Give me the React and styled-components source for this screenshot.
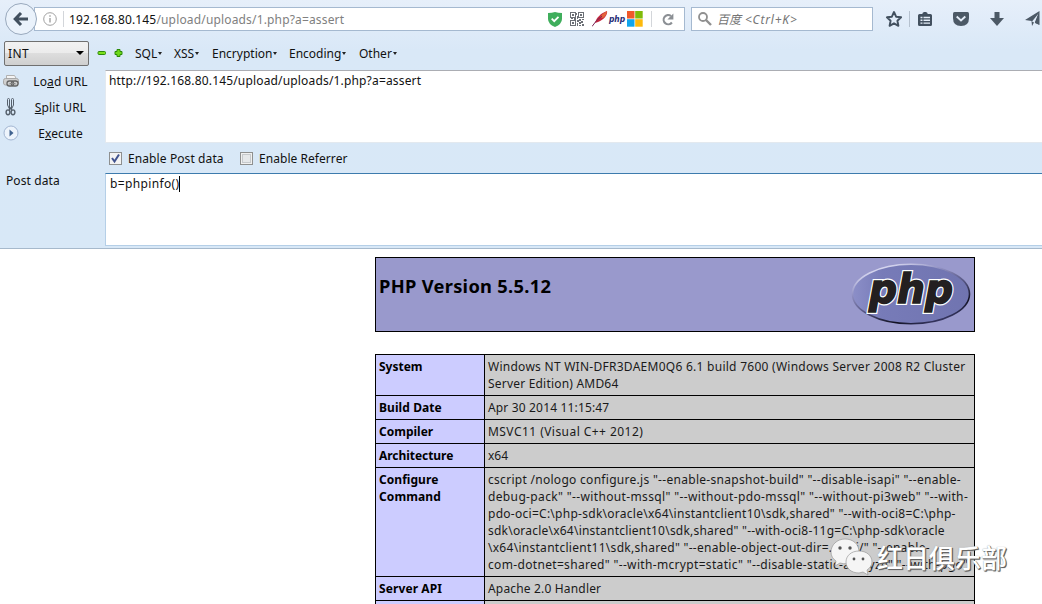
import React from "react";
import styled, { createGlobalStyle } from "styled-components";

const Global = createGlobalStyle`
  * { box-sizing: border-box; }
  html, body { margin: 0; background: #fff; overflow: hidden; }
  body {
    font-family: "Noto Sans", "Noto Sans CJK SC", sans-serif;
    font-size: 12px;
    line-height: 17px;
    color: #111;
  }
`;

const Page = styled.div`
  position: relative;
  width: 1042px;
  height: 604px;
  overflow: hidden;
`;
const Text = styled.span`
  white-space: pre;
  letter-spacing: ${(p) => p.$ls || 0}px;
`;
const Chrome = styled.header`
  height: 249px;
  background: linear-gradient(#e6effa 0, #e1ecf9 20px, #d9e8f7 50px, #d8e8f7 100%);
  border-bottom: 1px solid #a6b9cc;
`;
const NavBar = styled.div`
  display: flex;
  align-items: center;
  height: 38px;
  padding-left: 5px;
`;
const BackButton = styled.div`
  width: 32px;
  height: 32px;
  flex: none;
  border: 1px solid #99a9bd;
  border-radius: 50%;
  background: #eaf2fb;
  z-index: 1;
  display: flex;
  align-items: center;
  justify-content: center;
`;
const UrlField = styled.div`
  display: flex;
  align-items: center;
  width: 651px;
  height: 24px;
  flex: none;
  margin-left: -3px;
  padding-left: 8px;
  border: 1px solid #a5b9d0;
  background: #fff;
  svg { flex: none; }
`;
const Divider = styled.i`
  width: 1px;
  height: 16px;
  flex: none;
  margin: ${(p) => p.$m};
  background: ${(p) => p.$c || "#d3d6da"};
`;
const Url = styled.div`
  flex: 1;
  color: #808080;
  b { font-weight: 400; color: #111; }
`;
const UrlIcons = styled.div`
  display: flex;
  align-items: center;
  height: 22px;
`;
const SearchField = styled.div`
  display: flex;
  align-items: center;
  width: 182px;
  height: 24px;
  flex: none;
  margin-left: 6px;
  padding-left: 6px;
  border: 1px solid #a5b9d0;
  background: #fff;
  color: #757575;
  font-style: italic;
  svg { margin-right: 5px; }
`;
const NavIcons = styled.div`
  display: flex;
  align-items: center;
  padding-left: 12px;
  svg { flex: none; }
`;
const HackBar = styled.div`
  display: flex;
  align-items: center;
  height: 32px;
  padding: 0 0 2px 4px;
`;
const Select = styled.div`
  display: flex;
  align-items: center;
  justify-content: space-between;
  width: 85px;
  height: 25px;
  margin-right: 8px;
  padding: 0 4px 0 3px;
  border: 1px solid #707070;
  border-radius: 2px;
  background: linear-gradient(#f2f2f2, #ebebeb 50%, #dddddd 50%, #cfcfcf);
`;
const SignIcon = styled.svg`
  flex: none;
  margin-right: ${(p) => p.$gap}px;
`;
const Menu = styled.div`
  display: flex;
  align-items: center;
  width: ${(p) => p.$w}px;
  flex: none;
`;
const Caret = styled.i`
  margin: 0 0 0 1px;
  border: 2px solid transparent;
  border-top: 3px solid #222;
  border-bottom: 0;
`;
const Panel = styled.div`
  display: grid;
  grid-template-columns: 105px 1fr;
  grid-template-rows: 73px 30px 73px;
`;
const Actions = styled.div`
  grid-row: 1 / 3;
  display: flex;
  flex-direction: column;
  height: 78px;
  margin-top: -2px;
`;
const Action = styled.div`
  display: grid;
  grid-template-columns: 16px 1fr;
  align-items: center;
  height: 26px;
  padding-left: 3px;
  span { justify-self: center; margin-right: 3px; }
`;
const Area = styled.div`
  border: 1px solid ${(p) => (p.$focus ? "#b5cfe7" : "#e3e9ef")};
  border-top-color: ${(p) => (p.$focus ? "#3d7bad" : "#abadb3")};
  border-right: 0;
  background: #fff;
  padding: ${(p) => (p.$focus ? "1px 0 0 4px" : "1px 0 0 3px")};
  color: #111;
`;
const Caption = styled.div`
  margin-top: -1px;
  padding: 0 0 0 6px;
`;
const Options = styled.div`
  display: flex;
  align-items: center;
  padding-left: 4px;
`;
const Box = styled.svg`
  margin-right: 6px;
`;
const Cursor = styled.i`
  display: inline-block;
  width: 1px;
  height: 16px;
  vertical-align: -4px;
  background: #000;
`;
const Info = styled.main`
  width: 600px;
  margin: 8px 0 0 375px;
  color: #111;
`;
const Banner = styled.div`
  display: flex;
  justify-content: space-between;
  height: 75px;
  padding: 3px 3px 0;
  border: 1px solid #000;
  background: #9999cc;
`;
const Title = styled.h1`
  margin: 13px 0 0;
  font-size: 18.3px;
  line-height: 24px;
  color: #000;
`;
const Table = styled.div`
  margin-top: 22px;
  border: 1px solid #000;
  border-bottom: 0;
  background: #000;
`;
const Row = styled.div`
  display: grid;
  grid-template-columns: 108px 489px;
  column-gap: 1px;
  border-bottom: 1px solid #000;
`;
const Cell = styled.div`
  display: flex;
  flex-direction: column;
  min-height: 23px;
  padding: 3px 0 3px 3px;
  background: ${(p) => (p.$head ? "#ccccff" : "#cccccc")};
  font-weight: ${(p) => (p.$head ? 700 : 400)};
  color: ${(p) => (p.$head ? "#000" : "#1a1a1a")};
`;
const Watermark = styled.div`
  position: absolute;
  left: 830px;
  top: 537px;
  display: flex;
  align-items: center;
  color: #fff;
  font: 500 26px/40px "Noto Sans CJK SC", sans-serif;
  text-shadow: 1px 1px 0 #666, 1px 1px 1px #555, 0 0 1px #999;
`;

const rows = [
  [["System", 0], [["Windows NT WIN-DFR3DAEM0Q6 6.1 build 7600 (Windows Server 2008 R2 Cluster", 0.265], ["Server Edition) AMD64", 0.2]]],
  [["Build Date", 0.08], [["Apr 30 2014 11:15:47", 0.16]]],
  [["Compiler", 0], [["MSVC11 (Visual C++ 2012)", 0.45]]],
  [["Architecture", -0.05], [["x64", 0]]],
  [["Configure", 0.05, "Command", 0.1], [
    ['cscript /nologo configure.js "--enable-snapshot-build" "--disable-isapi" "--enable-', 0.29],
    ['debug-pack" "--without-mssql" "--without-pdo-mssql" "--without-pi3web" "--with-', 0.36],
    ['pdo-oci=C:\\php-sdk\\oracle\\x64\\instantclient10\\sdk,shared" "--with-oci8=C:\\php-', 0.27],
    ['sdk\\oracle\\x64\\instantclient10\\sdk,shared" "--with-oci8-11g=C:\\php-sdk\\oracle', 0.22],
    ['\\x64\\instantclient11\\sdk,shared" "--enable-object-out-dir=../obj/" "--enable-', 0.28],
    ['com-dotnet=shared" "--with-mcrypt=static" "--disable-static-analyze" "--with-pgo"', 0.33],
  ]],
  [["Server API", 0.1], [["Apache 2.0 Handler", 0.17]]],
  [["", 0], [["", 0]]],
];

const menus = [["SQL", 39], ["XSS", 38], ["Encryption", 77], ["Encoding", 70], ["Other", 50]];

const PhpLogo = () => (
  <svg width="120" height="66" viewBox="0 0 120 66">
    <defs>
      <linearGradient id="rim" x1="0.25" y1="0" x2="0.8" y2="0.9">
        <stop offset="0" stopColor="#e4e4f8" />
        <stop offset="0.3" stopColor="#9090c2" />
        <stop offset="0.6" stopColor="#50507c" />
        <stop offset="0.85" stopColor="#111122" />
        <stop offset="1" stopColor="#33335c" />
      </linearGradient>
      <linearGradient id="body" x1="0" x2="1">
        <stop offset="0" stopColor="#8c8fc8" />
        <stop offset="0.25" stopColor="#777bb8" />
        <stop offset="1" stopColor="#7074b0" />
      </linearGradient>
    </defs>
    <ellipse cx="60" cy="33" rx="58.500" ry="29.800" fill="url(#body)" stroke="url(#rim)" strokeWidth="1.600" />
    <g fontFamily="DejaVu Sans" fontWeight="700" fontStyle="italic" fontSize="40" strokeLinejoin="miter">
      <text x="18" y="42" textLength="84" lengthAdjust="spacingAndGlyphs" fill="#fff" stroke="#fff" strokeWidth="4">php</text>
      <text x="18" y="42" textLength="84" lengthAdjust="spacingAndGlyphs" fill="#231f20" stroke="#231f20" strokeWidth="1.600">php</text>
    </g>
  </svg>
);

const QrIcon = () => (
  <svg width="14" height="14" viewBox="0 0 14 14" fill="none" stroke="#6c7076" shapeRendering="crispEdges">
    <path d="M.5.5h5v5h-5zM8.5.5h5v5h-5zM.5 8.5h5v5h-5z" />
    <path fill="#6c7076" stroke="none" d="M2 2h2v2H2zM10 2h2v2h-2zM2 10h2v2H2zM6 1h1v2H6zM7 4h1v3H7zM1 6h2v1H1zM4 6h2v2H4zM9 7h2v2H9zM12 7h2v1h-2zM7 8h2v2H7zM11 9h2v2h-2zM9 10h2v2H9zM7 11h1v3H7zM12 12h2v2h-2zM9 13h2v1H9z" />
  </svg>
);

export default function App() {
  return (
    <Page>
      <Global />
      <Chrome>
        <NavBar>
          <BackButton>
            <svg width="16" height="14" viewBox="0 0 16 14" fill="none" stroke="#42505f" strokeWidth="3">
              <path d="M8 1 2.2 7 8 13M3 7h12" />
            </svg>
          </BackButton>
          <UrlField>
            <svg width="14" height="14" viewBox="0 0 14 14" fill="none" stroke="#a0a0a0">
              <circle cx="7" cy="7" r="6.3" />
              <path d="M7 6v4.5M7 3.3v1.4" strokeWidth="1.4" />
            </svg>
            <Divider $m="0 5px 0 6px" />
            <Url><Text $ls={0.16}><b>192.168.80.145</b>/upload/uploads/1.php?a=assert</Text></Url>
            <UrlIcons>
              <svg width="14" height="15" viewBox="0 0 14 15">
                <path d="M0 1Q4 1 7 0q3 1 7 1v6q0 5-7 8-7-3-7-8z" fill="#3fae5c" />
                <path d="M3.7 6.7 6.2 9.2l4.3-4.4" fill="none" stroke="#fff" strokeWidth="1.8" />
              </svg>
              <Divider $m="0 7px 0 0" $c="transparent" />
              <QrIcon />
              <Divider $m="0 7px 0 0" $c="transparent" />
              <svg width="16" height="16" viewBox="0 0 16 16">
                <path d="M3 12C4 7 9 2 15 0c1 3-3 9-9 11z" fill="#c5273d" />
                <path d="M8 6q3-4 7-6 0 4-4 7z" fill="#e3653c" />
                <path d="M0 15.500Q4 9 10 5" fill="none" stroke="#7b2655" strokeWidth="1" />
              </svg>
              <svg width="19" height="16" viewBox="0 0 19 16">
                <text x="1" y="11" textLength="16" lengthAdjust="spacingAndGlyphs" fontFamily="DejaVu Sans" fontWeight="700" fontStyle="italic" fontSize="9" fill="#1f2b75">php</text>
              </svg>
              <svg width="16" height="16" viewBox="0 0 16 16">
                <path fill="#f0592b" d="M0 0h7.5v7.5H0z" /><path fill="#80bb0a" d="M8.2 0h7.5v7.5H8.2z" />
                <path fill="#10a5ec" d="M0 8.2h7.5v7.5H0z" /><path fill="#fdb90c" d="M8.2 8.2h7.5v7.5H8.2z" />
              </svg>
              <Divider $m="0 10px 0 8px" />
              <svg width="12" height="13" viewBox="0 0 12 13">
                <path d="M9.9 9.5A4.6 4.6 0 1 1 9 3" fill="none" stroke="#8b8f94" strokeWidth="2.100" />
                <path d="M11.4.5v6H5.4z" fill="#8b8f94" />
              </svg>
              <Divider $m="0 9px 0 0" $c="transparent" />
            </UrlIcons>
          </UrlField>
          <SearchField>
            <svg width="14" height="14" viewBox="0 0 14 14" fill="none" stroke="#909090">
              <circle cx="5" cy="5" r="4" strokeWidth="1.8" /><path d="m8 8 5 5" strokeWidth="2.4" />
            </svg>
            <Text>百度</Text><Text $ls={0.8}> &lt;Ctrl+K&gt;</Text>
          </SearchField>
          <NavIcons>
            <svg width="18" height="18" viewBox="0 0 18 18" fill="none" stroke="#42505f" strokeWidth="1.9" strokeLinejoin="round">
              <path d="m9 2 2.1 4.7 5 .6-3.7 3.4 1 5.1L9 13.3l-4.400 2.500 1-5.100-3.700-3.400 5-.6z" />
            </svg>
            <Divider $m="0 8px 0 6px" $c="#b5c1cf" />
            <svg width="14" height="14" viewBox="0 0 14 14" fill="none">
              <path d="M1.500 2H4.500V1L6 0h2l1.500 1v1h3Q14 2 14 3.500v9Q14 14 12.500 14h-11Q0 14 0 12.500v-9Q0 2 1.500 2z" fill="#42505f" />
              <path d="M2.500 5.500h2M2.500 8.300h2M2.500 11.100h2M5.500 5.500h6.500M5.500 8.300h6.500M5.500 11.100h6.500" stroke="#e4edf8" strokeWidth="1.400" />
            </svg>
            <Divider $m="0 20px 0 0" $c="transparent" />
            <svg width="16" height="14" viewBox="0 0 16 14">
              <path d="M1.5 0h13Q16 0 16 1.5V6q0 8-8 8T0 6V1.500Q0 0 1.500 0z" fill="#4c5966" />
              <path d="m3.700 4.500 4.300 4 4.300-4" fill="none" stroke="#e4edf8" strokeWidth="1.900" />
            </svg>
            <Divider $m="0 20px 0 0" $c="transparent" />
            <svg width="14" height="14" viewBox="0 0 14 14"><path d="M4.500 0h5v6H14l-7 8-7-8h4.500z" fill="#4c5966" /></svg>
            <Divider $m="0 20px 0 0" $c="transparent" />
            <svg width="16" height="16" viewBox="0 0 16 16">
              <path d="M14.500 0v14L10 12l4-10-7 8.500 2 1-2 3.500-.5-5L0 9z" fill="#4c5966" />
              <path d="M14 1 9.800 11.500l4.200 2z" fill="#4c5966" />
            </svg>
          </NavIcons>
        </NavBar>
        <HackBar>
          <Select>
            <Text $ls={0.4}>INT</Text>
            <svg width="8" height="4" viewBox="0 0 8 4"><path d="M0 0h8L4 4z" /></svg>
          </Select>
          <SignIcon $gap={8} width="9" height="10" viewBox="0 0 9 10"><rect x="1" y="3.500" width="7.500" height="3" rx="1" fill="#7be01c" stroke="#2d8a0a" /></SignIcon>
          <SignIcon $gap={12} width="9" height="10" viewBox="0 0 9 10"><path d="M3 1.500h3v2h2v3H6v2H3v-2H1v-3h2z" fill="#6fd91a" stroke="#2d8a0a" /></SignIcon>
          {menus.map(([name, w]) => (
            <Menu key={name} $w={w}><Text>{name}</Text><Caret /></Menu>
          ))}
        </HackBar>
        <Panel>
          <Actions>
            <Action>
              <svg width="16" height="16" viewBox="0 0 16 16" fill="none">
                <path d="M3.500 6V2.500h8L13.500 6" fill="#f4f4f4" stroke="#b0b0b0" />
                <rect x=".5" y="5.500" width="15" height="6.500" rx="2" fill="#d0d0d0" stroke="#a8a8a8" />
                <rect x="4" y="8" width="6.500" height="5" rx="2.300" strokeWidth="1.300" stroke="#666" />
                <rect x="8.500" y="8" width="6.500" height="5" rx="2.300" strokeWidth="1.300" stroke="#666" />
                <path d="M6.500 10.500h6" stroke="#888" />
              </svg>
              <Text $ls={0.15}>Lo<u>a</u>d URL</Text>
            </Action>
            <Action>
              <svg width="16" height="18" viewBox="0 0 16 18" fill="none" stroke="#56606c">
                <path d="M6.500 11 4.500 7V1.500Q4.500.5 5.500.5t1 1V11M8.500 11l2-4V1.500q0-1-1-1t-1 1V11" />
                <ellipse cx="5" cy="14.300" rx="1.900" ry="2.400" strokeWidth="1.400" /><ellipse cx="10" cy="14.300" rx="1.900" ry="2.400" strokeWidth="1.400" />
                <path d="M6 12.500 7.500 10 9 12.500" strokeWidth="1.300" />
              </svg>
              <Text $ls={0.15}><u>S</u>plit URL</Text>
            </Action>
            <Action>
              <svg width="16" height="16" viewBox="0 0 16 16">
                <circle cx="8" cy="8" r="7" fill="#edf4fc" stroke="#a3b6d2" /><path d="m6.500 4.500 4 3.500-4 3.500z" fill="#40628f" />
              </svg>
              <Text $ls={0.1}>E<u>x</u>ecute</Text>
            </Action>
          </Actions>
          <Area><Text $ls={0.165}>http://192.168.80.145/upload/uploads/1.php?a=assert</Text></Area>
          <Options>
            <Box width="13" height="13" viewBox="0 0 13 13">
              <rect x=".5" y=".5" width="12" height="12" fill="#f3f3f3" stroke="#8e8f8f" /><path d="m3 6 2.500 3.500L10 2.500" fill="none" stroke="#41538f" strokeWidth="2" />
            </Box>
            <Menu $w={112}><Text $ls={0.1}>Enable Post data</Text></Menu>
            <Box width="13" height="13" viewBox="0 0 13 13"><rect x=".5" y=".5" width="12" height="12" fill="#f0f0f0" stroke="#8e8f8f" /><rect x="2.500" y="2.500" width="8" height="8" fill="#e6e8ea" stroke="#c6c9cc" /></Box>
            <Text $ls={0.05}>Enable Referrer</Text>
          </Options>
          <Caption><Text $ls={0.1}>Post data</Text></Caption>
          <Area $focus><Text $ls={0.36}>b=phpinfo()</Text><Cursor /></Area>
        </Panel>
      </Chrome>
      <Info>
        <Banner>
          <Title><Text $ls={0.3}>PHP Version 5.5.12</Text></Title>
          <PhpLogo />
        </Banner>
        <Table>
          {rows.map(([head, lines], i) => (
            <Row key={i}>
              <Cell $head><Text $ls={head[1]}>{head[0]}</Text>{head[2] && <Text $ls={head[3]}>{head[2]}</Text>}</Cell>
              <Cell>{lines.map(([t, ls], j) => <Text key={j} $ls={ls}>{t}</Text>)}</Cell>
            </Row>
          ))}
        </Table>
      </Info>
      <Watermark>
        <svg width="47" height="40" viewBox="0 0 47 40" fill="#f5f5f5" stroke="#999" strokeWidth=".7">
          <path d="M15 2C7 2 1 8 1 15c0 4 2 7 5 9l-1 5 5-3c9 3 19-3 19-11S23 2 15 2z" />
          <path d="M29 14c-8 0-13 5-13 11s5 11 13 11l4-1 5 3-1-5c3-2 5-5 5-8 0-6-5-11-13-11z" />
          <g fill="#555" stroke="none"><circle cx="10" cy="11" r="1.700" /><circle cx="20" cy="11" r="1.700" /><circle cx="24" cy="22" r="1.400" /><circle cx="33" cy="22" r="1.400" /></g>
        </svg>
        <Text>红日俱乐部</Text>
      </Watermark>
    </Page>
  );
}
